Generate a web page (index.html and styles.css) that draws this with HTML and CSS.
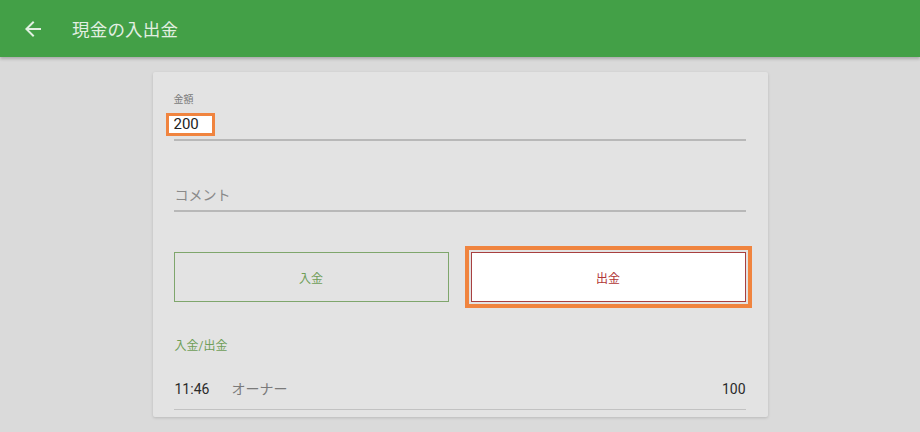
FILE: index.html
```html
<!DOCTYPE html>
<html lang="ja">
<head>
<meta charset="utf-8">
<link rel="stylesheet" href="styles.css">
</head>
<body>
<header class="appbar">
  <svg class="back" viewBox="0 0 24 24" width="24" height="24"><path d="M20 11H7.83l5.59-5.59L12 4l-8 8 8 8 1.41-1.41L7.83 13H20v-2z" fill="currentColor"/></svg>
  <h1 class="title">現金の入出金</h1>
</header>
<main class="main">
  <section class="card">
    <div class="field amount">
      <div class="label">金額</div>
      <div class="value-row"><span class="value">200</span></div>
      <div class="line"></div>
    </div>
    <div class="field comment">
      <div class="placeholder">コメント</div>
      <div class="line"></div>
    </div>
    <div class="buttons">
      <button class="btn in">入金</button>
      <button class="btn out">出金</button>
    </div>
    <div class="section-title">入金/出金</div>
    <div class="row">
      <span class="time">11:46</span>
      <span class="who">オーナー</span>
      <span class="amt">100</span>
    </div>
    <div class="divider"></div>
  </section>
</main>
</body>
</html>
```

FILE: styles.css
```css
html, body {
  margin: 0;
  padding: 0;
}
body {
  width: 920px;
  height: 432px;
  overflow: hidden;
  background: #dadada;
  font-family: Roboto, "Noto Sans CJK JP", sans-serif;
}
.appbar {
  height: 57px;
  background: #43a047;
  display: flex;
  align-items: center;
  box-shadow: 0 2px 3px rgba(0,0,0,0.22);
  position: relative;
  z-index: 1;
}
.back {
  margin-left: 21px;
  color: #e2f0e2;
  flex: none;
}
.title {
  margin: 0 0 0 27px;
  font-size: 17.5px;
  font-weight: 400;
  color: #e2efe2;
  letter-spacing: 0.2px;
}
.main {
  padding-top: 15px;
  display: flex;
  justify-content: center;
}
.card {
  width: 572px;
  background: #e3e3e3;
  padding: 22px 22px 7px 21px;
  box-shadow: 0 1px 3px rgba(0,0,0,0.15);
  border-radius: 2px;
}
.label {
  font-size: 10px;
  line-height: 12px;
  color: #7a7a7a;
}
.value-row {
  margin-top: 7px;
  height: 23px;
}
.value {
  display: inline-block;
  box-sizing: border-box;
  width: 49px;
  height: 23px;
  margin-left: -8px;
  padding-left: 5px;
  border: 3px solid #f0843f;
  background: #fff;
  font-size: 15px;
  line-height: 17px;
  color: #222;
}
.line {
  height: 2px;
  background: #b8b8b8;
  margin-top: 3px;
}
.comment {
  margin-top: 44px;
}
.placeholder {
  font-size: 14px;
  line-height: 20px;
  color: #8a8a8a;
  padding-left: 1px;
}
.comment .line {
  margin-top: 5px;
}
.buttons {
  margin-top: 40px;
  display: grid;
  grid-template-columns: 1fr 1fr;
  gap: 22px;
}
.btn {
  height: 50px;
  font-family: inherit;
  font-size: 12px;
  background: transparent;
  padding: 0;
}
.btn.in {
  border: 1px solid #7fa66c;
  color: #6f9e58;
}
.btn.out {
  border: 1px solid #a84040;
  color: #b03636;
  background: #fff;
  outline: 4px solid #f0843f;
  outline-offset: 2px;
}
.section-title {
  margin-top: 36px;
  font-size: 12px;
  line-height: 16px;
  color: #6f9e58;
  padding-left: 1px;
}
.row {
  margin-top: 25px;
  display: flex;
  align-items: center;
  font-size: 14px;
  line-height: 20px;
  padding-bottom: 10px;
  padding-left: 1px;
}
.time {
  color: #2a2a2a;
  width: 57px;
}
.who {
  color: #7a7a7a;
  flex: 1;
}
.amt {
  color: #2a2a2a;
}
.divider {
  height: 1px;
  background: #c2c2c2;
}
```
